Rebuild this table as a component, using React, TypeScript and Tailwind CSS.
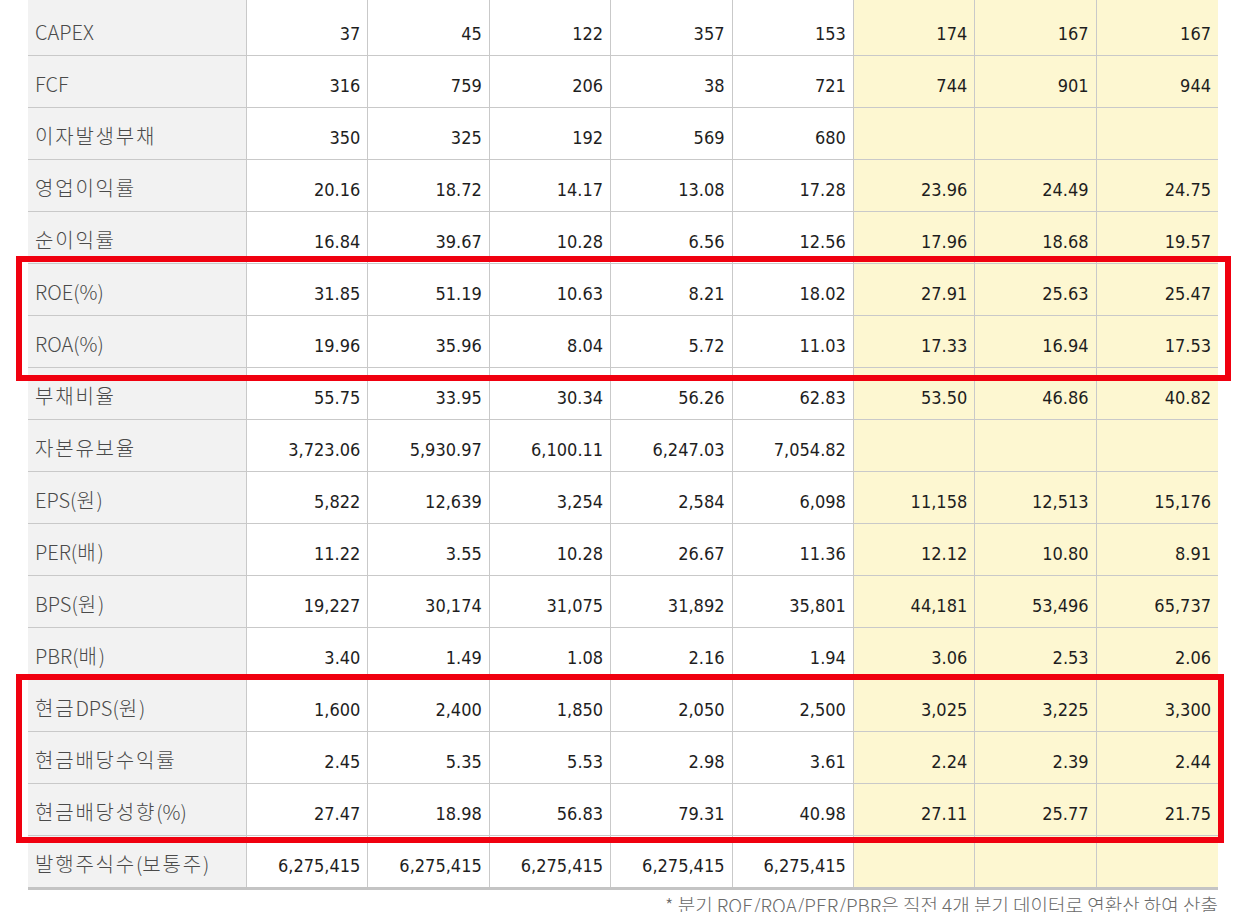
import React from "react";

type Row = { label: string; v: string[] };

const rows: Row[] = [
  { label: "CAPEX", v: ["37", "45", "122", "357", "153", "174", "167", "167"] },
  { label: "FCF", v: ["316", "759", "206", "38", "721", "744", "901", "944"] },
  { label: "이자발생부채", v: ["350", "325", "192", "569", "680", "", "", ""] },
  { label: "영업이익률", v: ["20.16", "18.72", "14.17", "13.08", "17.28", "23.96", "24.49", "24.75"] },
  { label: "순이익률", v: ["16.84", "39.67", "10.28", "6.56", "12.56", "17.96", "18.68", "19.57"] },
  { label: "ROE(%)", v: ["31.85", "51.19", "10.63", "8.21", "18.02", "27.91", "25.63", "25.47"] },
  { label: "ROA(%)", v: ["19.96", "35.96", "8.04", "5.72", "11.03", "17.33", "16.94", "17.53"] },
  { label: "부채비율", v: ["55.75", "33.95", "30.34", "56.26", "62.83", "53.50", "46.86", "40.82"] },
  { label: "자본유보율", v: ["3,723.06", "5,930.97", "6,100.11", "6,247.03", "7,054.82", "", "", ""] },
  { label: "EPS(원)", v: ["5,822", "12,639", "3,254", "2,584", "6,098", "11,158", "12,513", "15,176"] },
  { label: "PER(배)", v: ["11.22", "3.55", "10.28", "26.67", "11.36", "12.12", "10.80", "8.91"] },
  { label: "BPS(원)", v: ["19,227", "30,174", "31,075", "31,892", "35,801", "44,181", "53,496", "65,737"] },
  { label: "PBR(배)", v: ["3.40", "1.49", "1.08", "2.16", "1.94", "3.06", "2.53", "2.06"] },
  { label: "현금DPS(원)", v: ["1,600", "2,400", "1,850", "2,050", "2,500", "3,025", "3,225", "3,300"] },
  { label: "현금배당수익률", v: ["2.45", "5.35", "5.53", "2.98", "3.61", "2.24", "2.39", "2.44"] },
  { label: "현금배당성향(%)", v: ["27.47", "18.98", "56.83", "79.31", "40.98", "27.11", "25.77", "21.75"] },
  { label: "발행주식수(보통주)", v: ["6,275,415", "6,275,415", "6,275,415", "6,275,415", "6,275,415", "", "", ""] },
];

const labelFont = { fontFamily: '"Noto Sans CJK KR", "Noto Sans", sans-serif' };
const numFont = { fontFamily: '"DejaVu Sans Condensed", "Noto Sans", sans-serif' };

function Label({ text }: { text: string }) {
  const parts = text.match(/[\uAC00-\uD7A3]+|[^\uAC00-\uD7A3]+/g) || [];
  return (
    <>
      {parts.map((p, i) =>
        /[\uAC00-\uD7A3]/.test(p) ? (
          <span key={i} className="tracking-[1.8px]">
            {p}
          </span>
        ) : (
          <span key={i}>{p}</span>
        )
      )}
    </>
  );
}

function Cells({ values, empty }: { values: string[]; empty?: boolean }) {
  return (
    <>
      {values.map((val, i) => (
        <div
          key={i}
          className={
            "flex items-center justify-end pr-[7px] pt-[7px] text-[18px] text-[#1e1e1e] " +
            (i < 7 ? "border-r border-[#c9c9c9] " : "") +
            (i >= 5 ? "bg-[#fdf7d1]" : "bg-white")
          }
          style={numFont}
        >
          {empty ? "" : val}
        </div>
      ))}
    </>
  );
}

export default function App() {
  return (
    <div className="relative h-[912px] w-[1249px] overflow-hidden bg-white">
      <div className="ml-[28px] w-[1190px]">
        {/* partial previous row */}
        <div className="grid h-[3px] grid-cols-[219px_repeat(8,1fr)]">
          <div className="border-r border-[#c9c9c9] bg-[#f2f2f2]" />
          <Cells values={["", "", "", "", "", "", "", ""]} empty />
        </div>
        {rows.map((r) => (
          <div
            key={r.label}
            className="grid h-[52px] grid-cols-[219px_repeat(8,1fr)] border-t border-[#c9c9c9]"
          >
            <div
              className="flex items-center whitespace-nowrap border-r border-[#c9c9c9] bg-[#f2f2f2] pl-[7px] pt-[4px] text-[20px] font-light text-[#4a4a4a]"
              style={labelFont}
            >
              <Label text={r.label} />
            </div>
            <Cells values={r.v} />
          </div>
        ))}
        <div className="h-[3px] bg-[#c4c4c4]" />
        <div
          className="pt-[2px] text-right text-[19px] font-light leading-[26px] text-[#6a6a6a]"
          style={labelFont}
        >
          * 분기 ROE/ROA/PER/PBR은 직전 4개 분기 데이터로 연환산 하여 산출
        </div>
      </div>

      {/* red highlight boxes */}
      <div className="absolute left-[16px] top-[256px] h-[125px] w-[1215px] border-[6px] border-[#f0000f]" />
      <div className="absolute left-[16px] top-[674px] h-[169px] w-[1208px] border-[6px] border-[#f0000f]" />
    </div>
  );
}
